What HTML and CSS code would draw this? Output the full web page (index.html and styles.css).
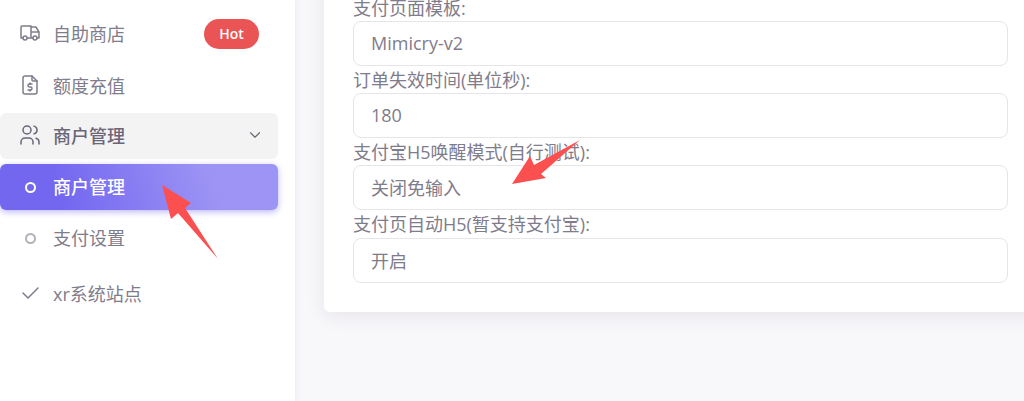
FILE: index.html
```html
<!DOCTYPE html>
<html lang="zh-CN">
<head>
    <meta charset="UTF-8">
    <meta name="viewport" content="width=device-width, initial-scale=1.0">
    <title>支付设置</title>
    <link rel="stylesheet" href="styles.css">
</head>
<body>
    <div class="layout">
        <aside class="sidebar">
            <a class="nav-item nav-shop">
                <svg class="nav-icon" viewBox="0 0 24 24"><circle cx="7" cy="17" r="2"/><circle cx="17" cy="17" r="2"/><path d="M5 17h-2v-11a1 1 0 0 1 1 -1h9v12m-4 0h6m4 0h2v-6h-8m0 -5h5l3 5"/></svg>
                <span class="nav-text">自助商店</span>
                <span class="badge">Hot</span>
            </a>
            <a class="nav-item nav-recharge">
                <svg class="nav-icon" viewBox="0 0 24 24"><path d="M14 3v4a1 1 0 0 0 1 1h4"/><path d="M17 21h-10a2 2 0 0 1 -2 -2v-14a2 2 0 0 1 2 -2h7l5 5v11a2 2 0 0 1 -2 2"/><path d="M14 11h-2.5a1.5 1.5 0 0 0 0 3h1a1.5 1.5 0 0 1 0 3h-2.5"/><path d="M12 17v1m0 -8v1"/></svg>
                <span class="nav-text">额度充值</span>
            </a>
            <a class="nav-item nav-group">
                <svg class="nav-icon" viewBox="0 0 24 24"><circle cx="9" cy="7" r="4"/><path d="M3 21v-2a4 4 0 0 1 4 -4h4a4 4 0 0 1 4 4v2"/><path d="M16 3.13a4 4 0 0 1 0 7.75"/><path d="M21 21v-2a4 4 0 0 0 -3 -3.85"/></svg>
                <span class="nav-text">商户管理</span>
                <svg class="nav-chevron" viewBox="0 0 24 24"><path d="M6 9l6 6l6 -6"/></svg>
            </a>
            <a class="nav-item nav-active">
                <span class="nav-dot"></span>
                <span class="nav-text">商户管理</span>
            </a>
            <a class="nav-item">
                <span class="nav-dot"></span>
                <span class="nav-text">支付设置</span>
            </a>
            <a class="nav-item nav-site">
                <svg class="nav-icon" viewBox="0 0 24 24"><path d="M5 12l5 5l10 -10"/></svg>
                <span class="nav-text">xr系统站点</span>
            </a>
        </aside>

        <main class="content">
            <form class="card">
                <label class="field-label">支付页面模板:</label>
                <div class="field-input">Mimicry-v2</div>
                <label class="field-label">订单失效时间(单位秒):</label>
                <div class="field-input">180</div>
                <label class="field-label">支付宝H5唤醒模式(自行测试):</label>
                <div class="field-input">关闭免输入</div>
                <label class="field-label field-label-last">支付页自动H5(暂支持支付宝):</label>
                <div class="field-input">开启</div>
            </form>
        </main>
    </div>

    <!-- 截图上的红色标注箭头 -->
    <svg class="annotations" viewBox="0 0 1024 401">
        <polygon points="162,185 191,203 185,208 218,259 178,213 171,219"/>
        <polygon points="512,184 530,156 534,165 580,140 541,174 546,178"/>
    </svg>
</body>
</html>
```

FILE: styles.css
```css
* {
    box-sizing: border-box;
}
body {
    margin: 0;
    height: 401px;
    overflow: hidden;
    position: relative;
    font-family: "Open Sans", "Noto Sans CJK SC", sans-serif;
    font-size: 18px;
    color: #7f7c8b;
    background: #f8f7fa;
}
.layout {
    display: flex;
    height: 100%;
}
.sidebar {
    flex: 0 0 295px;
    display: flex;
    flex-direction: column;
    padding: 11px 17px 0 0;
    background: #fff;
    box-shadow: 0 0 6px rgba(75, 70, 92, 0.1);
}
.nav-item {
    display: flex;
    align-items: center;
    height: 46px;
    margin-bottom: 5px;
    padding: 0 19px 2px 18px;
    border-radius: 6px;
}
.nav-shop {
    margin-bottom: 6px;
}
.nav-recharge {
    margin-bottom: 4px;
}
.nav-group {
    background: #f3f3f4;
    color: #6a6678;
    font-weight: 500;
}
.nav-active {
    background: linear-gradient(72deg, #7367f0 22%, rgba(115, 103, 240, 0.7) 76%);
    box-shadow: 0 2px 6px rgba(115, 103, 240, 0.48);
    color: #fff;
    font-weight: 500;
}
.nav-site {
    margin-top: 5px;
}
.nav-icon {
    flex: none;
    width: 24px;
    height: 24px;
    margin-right: 11px;
    fill: none;
    stroke: currentColor;
    stroke-width: 1.5;
    stroke-linecap: round;
    stroke-linejoin: round;
}
.nav-text {
    flex: 1;
}
.nav-chevron {
    flex: none;
    width: 18px;
    height: 18px;
    margin-right: -5px;
    fill: none;
    stroke: currentColor;
    stroke-width: 1.5;
    stroke-linecap: round;
    stroke-linejoin: round;
}
.nav-dot {
    flex: none;
    width: 11px;
    height: 11px;
    margin: 2px 17px 0 7px;
    border: 2px solid currentColor;
    border-radius: 50%;
    opacity: 0.6;
}
.nav-active .nav-dot {
    opacity: 1;
}
.badge {
    margin-top: 2px;
    padding: 0 14px;
    width: 55px;
    height: 30px;
    line-height: 30px;
    text-align: center;
    border-radius: 15px;
    background: #ea5455;
    color: #fff;
    font-size: 14px;
    font-weight: 600;
}
.content {
    flex: 1;
    min-width: 0;
    padding-left: 29px;
}
.card {
    width: 740px;
    margin-top: -33px;
    padding: 27px 17px 29px 29px;
    background: #fff;
    border-radius: 6px;
    box-shadow: 0 4px 18px rgba(75, 70, 92, 0.1);
}
.field-label {
    display: block;
    height: 27px;
    line-height: 28px;
    white-space: nowrap;
}
.field-label-last {
    height: 28px;
}
.field-input {
    display: flex;
    align-items: center;
    width: 655px;
    height: 45px;
    padding: 0 17px 1px;
    border: 1.5px solid #e6e5e8;
    border-radius: 8px;
}
.annotations {
    position: absolute;
    left: 0;
    top: 0;
    width: 1024px;
    height: 401px;
    fill: #fc4f4f;
    pointer-events: none;
}
```
